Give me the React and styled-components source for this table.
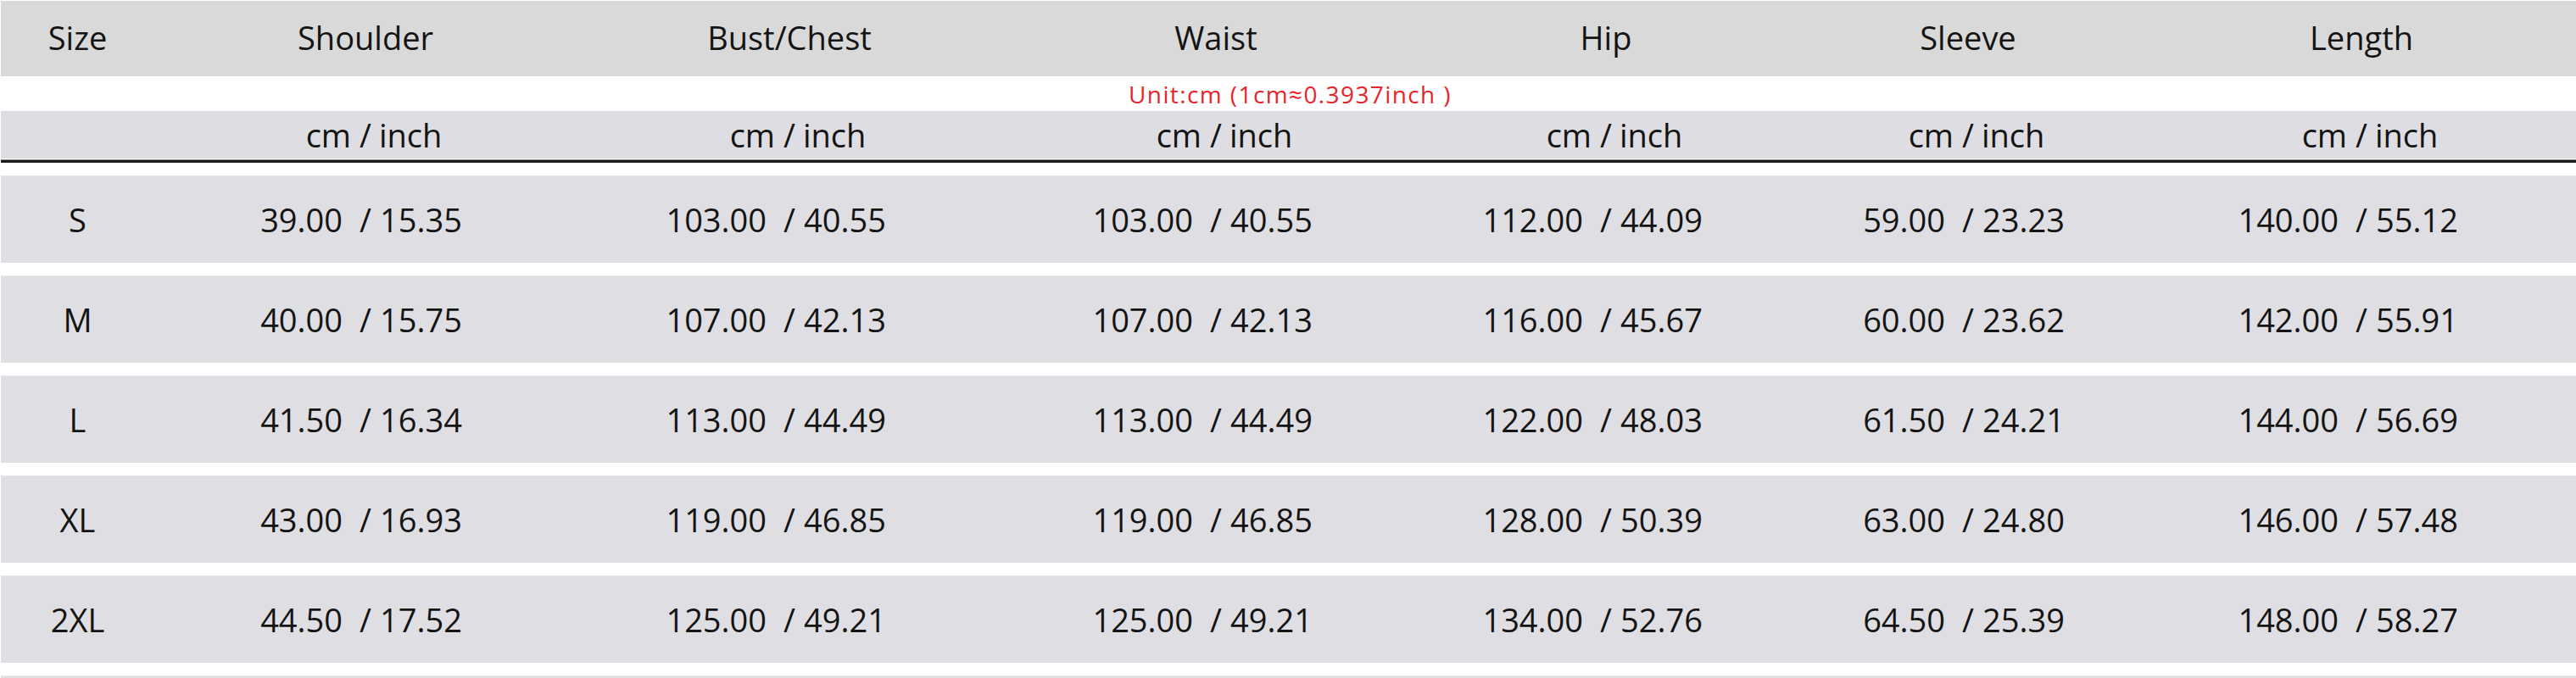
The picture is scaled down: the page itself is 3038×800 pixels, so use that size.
import React from 'react'
import styled, { createGlobalStyle } from 'styled-components'

const GlobalStyle = createGlobalStyle`
  body {
    margin: 0;
    background: #fff;
    font-family: "Open Sans", "Noto Sans", sans-serif;
  }
`;

const COLUMNS = '181px 498px 502px 504px 416px 438px 490px';

const Page = styled.div`
  width: 3038px;
  padding: 1px 0 0 1px;
  box-sizing: border-box;
  color: #141414;
`;

const HeaderRow = styled.div`
  display: grid;
  grid-template-columns: ${COLUMNS};
  align-items: center;
  height: 89px;
  padding-bottom: 4px;
  box-sizing: border-box;
  background: #d9d9d9;
  font-size: 38px;
`;

const UnitRow = styled.div`
  height: 41px;
  display: flex;
  align-items: center;
  justify-content: center;
  padding-left: 4px;
  color: #e5252b;
  font-size: 28px;
  letter-spacing: 1.4px;
  white-space: pre;
`;

const SubRow = styled.div`
  display: grid;
  grid-template-columns: ${COLUMNS};
  align-items: center;
  height: 56px;
  background: #dedee2;
  font-size: 38px;
`;

const Rule = styled.div`
  height: 3px;
  margin: 2px 0 15px;
  background: #1b1b1b;
  box-shadow: 0 -1px 0 #8a8a8a;
`;

const Body = styled.div`
  display: flex;
  flex-direction: column;
  gap: 15px;
`;

const DataRow = styled.div`
  display: grid;
  grid-template-columns: ${COLUMNS};
  align-items: center;
  height: 103px;
  background: #dfdfe3;
  border-top: 1px solid #e6e6ea;
  box-sizing: border-box;
  font-size: 38px;
`;

const Cell = styled.div`
  text-align: center;
  white-space: nowrap;
`;

const Split = styled.div`
  display: grid;
  grid-template-columns: 1fr auto 1fr;
  align-items: center;
  white-space: nowrap;
`;

const Left = styled.span`
  text-align: right;
  padding-right: ${p => p.$pad}px;
`;

const Right = styled.span`
  text-align: left;
  padding-left: ${p => p.$pad}px;
`;

const headers = ['Size', 'Shoulder', 'Bust/Chest', 'Waist', 'Hip', 'Sleeve', 'Length'];

const rows = [
  ['S', ['39.00', '15.35'], ['103.00', '40.55'], ['103.00', '40.55'], ['112.00', '44.09'], ['59.00', '23.23'], ['140.00', '55.12']],
  ['M', ['40.00', '15.75'], ['107.00', '42.13'], ['107.00', '42.13'], ['116.00', '45.67'], ['60.00', '23.62'], ['142.00', '55.91']],
  ['L', ['41.50', '16.34'], ['113.00', '44.49'], ['113.00', '44.49'], ['122.00', '48.03'], ['61.50', '24.21'], ['144.00', '56.69']],
  ['XL', ['43.00', '16.93'], ['119.00', '46.85'], ['119.00', '46.85'], ['128.00', '50.39'], ['63.00', '24.80'], ['146.00', '57.48']],
  ['2XL', ['44.50', '17.52'], ['125.00', '49.21'], ['125.00', '49.21'], ['134.00', '52.76'], ['64.50', '25.39'], ['148.00', '58.27']],
];

const Pair = ({ cm, inch, gapL, gapR }) => (
  <Split>
    <Left $pad={gapL}>{cm}</Left>
    <span>/</span>
    <Right $pad={gapR}>{inch}</Right>
  </Split>
)

const App = () => {
  return (
    <Page>
      <GlobalStyle />
      <HeaderRow>
        {headers.map(h => <Cell key={h}>{h}</Cell>)}
      </HeaderRow>
      <UnitRow>Unit:cm (1cm≈0.3937inch )</UnitRow>
      <SubRow>
        <Cell />
        {headers.slice(1).map(h => (
          <Pair key={h} cm="cm" inch="inch" gapL={10} gapR={9} />
        ))}
      </SubRow>
      <Rule />
      <Body>
        {rows.map(([size, ...vals]) => (
          <DataRow key={size}>
            <Cell>{size}</Cell>
            {vals.map(([cm, inch], i) => (
              <Pair key={i} cm={cm} inch={inch} gapL={20} gapR={10} />
            ))}
          </DataRow>
        ))}
        {/* next row peeks in at the bottom edge of the frame */}
        <DataRow />
      </Body>
    </Page>
  )
}

export default App
